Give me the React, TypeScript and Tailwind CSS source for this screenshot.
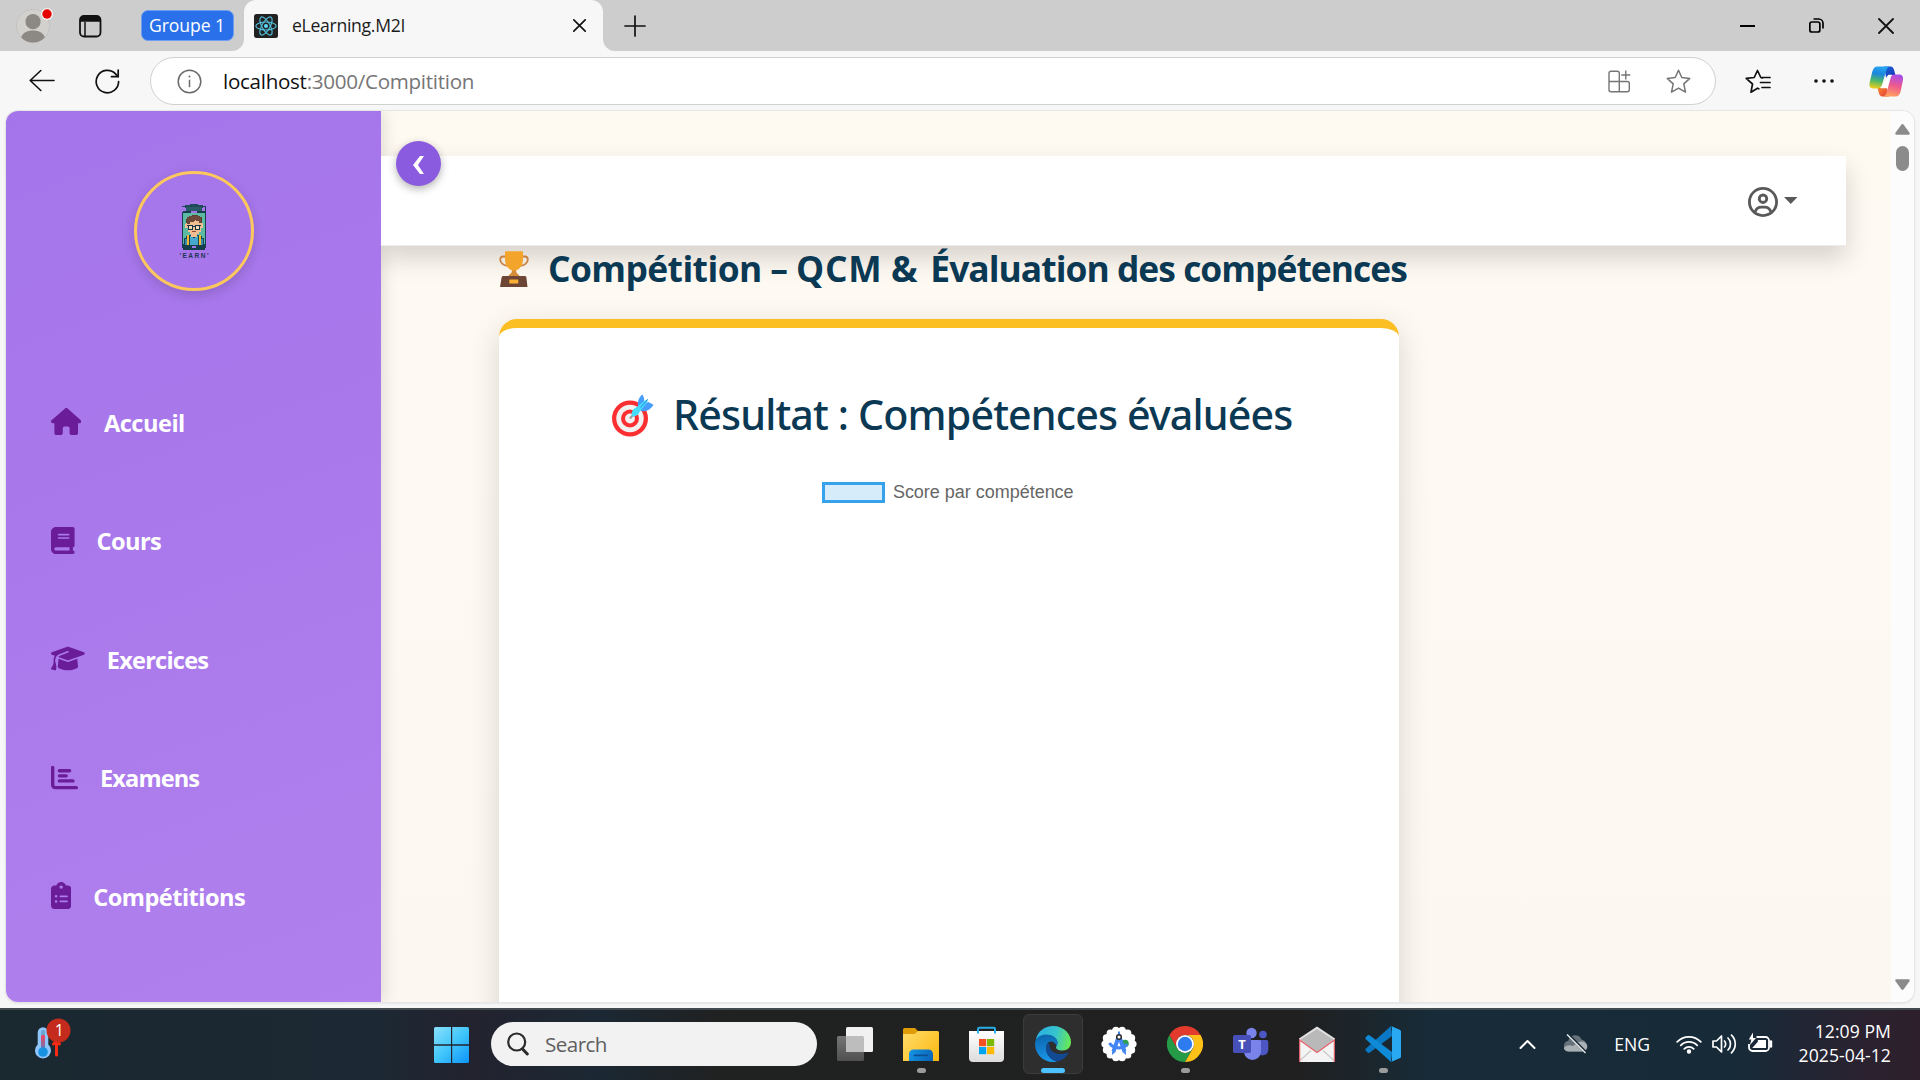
import React from "react";
import {
  FaHouse,
  FaBook,
  FaGraduationCap,
  FaChartBar,
  FaClipboardList,
  FaRegCircleUser,
} from "react-icons/fa6";

const ui = "font-['Open_Sans','Noto_Sans',sans-serif]";

/* ---------- Browser chrome icons ---------- */

function Avatar() {
  return (
    <svg width="38" height="38" viewBox="0 0 38 38" fill="none">
      <circle cx="17" cy="21" r="16.5" fill="#d3d1ce" stroke="#bdbbb8" strokeWidth="0.6" />
      <circle cx="17" cy="16.7" r="7.6" fill="#8c8884" />
      <path d="M5.2 32.5C6.5 28 11 25.6 17 25.6s10.500 2.400 11.800 6.900A16.500 16.500 0 0 1 17 37.500a16.500 16.500 0 0 1-11.800-5z" fill="#8c8884" />
      <circle cx="31" cy="9" r="6" fill="#f3f3f3" />
      <circle cx="31" cy="9" r="4.700" fill="#e60000" />
    </svg>
  );
}

function TabActions() {
  return (
    <svg width="23" height="23" viewBox="0 0 23 23" fill="none">
      <rect x="1" y="1" width="20.500" height="20.500" rx="4" stroke="#111" strokeWidth="1.800" />
      <path d="M1 6.800V5a4 4 0 0 1 4-4h12.500a4 4 0 0 1 4 4v1.800z" fill="#111" />
      <path d="M6 7v14.500" stroke="#111" strokeWidth="1.500" />
    </svg>
  );
}

function ReactFavicon() {
  return (
    <svg width="24" height="24" viewBox="0 0 24 24" fill="none">
      <rect width="24" height="24" rx="2.500" fill="#222" />
      <g stroke="#53c1de" strokeWidth="1.150">
        <ellipse cx="12" cy="12" rx="10.200" ry="4" />
        <ellipse cx="12" cy="12" rx="10.200" ry="4" transform="rotate(60 12 12)" />
        <ellipse cx="12" cy="12" rx="10.200" ry="4" transform="rotate(120 12 12)" />
      </g>
      <circle cx="12" cy="12" r="2" fill="#61dafb" />
    </svg>
  );
}

function Cross({ size, w = 1.6 }: { size: number; w?: number }) {
  return (
    <svg width={size} height={size} viewBox="0 0 16 16" fill="none" stroke="#111" strokeWidth={w} strokeLinecap="round">
      <path d="M1 1l14 14M15 1L1 15" />
    </svg>
  );
}

function BackArrow() {
  return (
    <svg width="26" height="24" viewBox="0 0 26 24" fill="none" stroke="#111" strokeWidth="1.600" strokeLinecap="round" strokeLinejoin="round">
      <path d="M25 11.500H1.200M11.800 1.500L1.200 11.500l10.600 10" />
    </svg>
  );
}

function Reload() {
  return (
    <svg width="25" height="25" viewBox="0 0 25 25" fill="none" stroke="#111" strokeWidth="1.700" strokeLinecap="round" strokeLinejoin="round">
      <path d="M23.600 12.500A11.200 11.200 0 1 1 20.500 4.800l2.500 2.600" />
      <path d="M23.200 1v6.700h-6.700" />
    </svg>
  );
}

function InfoIcon() {
  return (
    <svg width="25" height="25" viewBox="0 0 25 25" fill="none" stroke="#6b6b6b" strokeWidth="1.500">
      <circle cx="12.500" cy="12.500" r="11.300" />
      <path d="M12.500 10.800v7.400" />
      <circle cx="12.500" cy="7.400" r="1" fill="#6b6b6b" stroke="none" />
    </svg>
  );
}

function AppsAdd() {
  return (
    <svg width="23" height="23" viewBox="0 0 23 23" fill="none" stroke="#757575" strokeWidth="1.400">
      <path d="M1 11.500V3.200a2 2 0 0 1 2-2h6.300a2 2 0 0 1 2 2v8.300M1 11.500v8.300a2 2 0 0 0 2 2h16.300a2 2 0 0 0 2-2v-6.300a2 2 0 0 0-2-2zM11.300 11.500v10.300" />
      <path d="M17.800 .5v9M13.300 5h9" />
    </svg>
  );
}

function Star() {
  return (
    <svg width="25" height="25" viewBox="0 0 25 25" fill="none" stroke="#757575" strokeWidth="1.500" strokeLinejoin="round">
      <path d="M12.500 1.300l3.300 7.200 8 .9-6 5.500 1.700 8.200-7-4-7 4 1.700-8.200-6-5.500 8-.9z" />
    </svg>
  );
}

function FavList() {
  return (
    <svg width="26" height="25" viewBox="0 0 26 25" fill="none" stroke="#111" strokeWidth="1.700" strokeLinejoin="round" strokeLinecap="round">
      <path d="M13.800 19.800l-1.300-.600-6.500 4 1.500-8.200-6.300-5.600 8-.9 3.300-7 3.300 7 1.700.300" />
      <path d="M17 8.500h8M15.500 13.500h9.500M17 18.500h8" />
    </svg>
  );
}

function Copilot() {
  return (
    <svg width="35" height="31" viewBox="0 0 35 31" fill="none">
      <defs>
        <linearGradient id="cpA" x1="12" y1="0" x2="8" y2="23" gradientUnits="userSpaceOnUse">
          <stop offset="0" stopColor="#27a9f2" />
          <stop offset="0.350" stopColor="#1c86dc" />
          <stop offset="0.650" stopColor="#4cb86a" />
          <stop offset="1" stopColor="#f5cf17" />
        </linearGradient>
        <linearGradient id="cpB" x1="28" y1="8" x2="22" y2="31" gradientUnits="userSpaceOnUse">
          <stop offset="0" stopColor="#a44cf0" />
          <stop offset="0.500" stopColor="#ee5a8e" />
          <stop offset="1" stopColor="#ffa45c" />
        </linearGradient>
        <linearGradient id="cpC" x1="18" y1="0" x2="25" y2="9" gradientUnits="userSpaceOnUse">
          <stop offset="0" stopColor="#1b62d8" />
          <stop offset="1" stopColor="#1638b8" />
        </linearGradient>
        <linearGradient id="cpD" x1="8" y1="22" x2="17" y2="31" gradientUnits="userSpaceOnUse">
          <stop offset="0" stopColor="#fb8a2c" />
          <stop offset="1" stopColor="#e2413a" />
        </linearGradient>
      </defs>
      <path d="M15 .500h6.500c2.200 0 3 1.500 3.600 3.600l1.300 4.900H20c-1.500.300-2.300 1.500-2.800 3z" fill="url(#cpC)" />
      <path d="M20 30.500h-6.500c-2.200 0-3-1.500-3.600-3.600L8.500 22H14c1.800 0 2.600-1.200 3.100-3z" fill="url(#cpD)" />
      <path d="M19.500 8.700H23l-4 13.600h-7.300z" fill="#fff" />
      <path d="M8.500 .500H21c-2.200.200-3.200 2.200-3.900 4.500l-4 13.500c-.8 2.500-2.200 4-4.600 4H4.300C1 22.500-.1 20 .6 16.500L3.300 5.800C4.200 2.300 5.700.5 8.500.5z" fill="url(#cpA)" />
      <path d="M26.500 30.500H13.500c2.400-.2 3.500-1.700 4.200-4.200l3.900-14.300c.5-2 1.600-3.500 3.700-3.500h4.900c3.300 0 4.400 2.500 3.700 6l-2.200 10.700c-.9 3.500-2.400 5.300-5.200 5.300z" fill="url(#cpB)" />
    </svg>
  );
}

function TabStrip() {
  return (
    <div className="flex h-[51px] shrink-0 bg-[#cdcdcd]">
      <div className="flex w-[232px] shrink-0 items-center pl-4">
        <div className="mb-1 h-[38px] w-[38px]"><Avatar /></div>
        <div className="ml-[25px] mt-[1px]"><TabActions /></div>
        <div className={`ml-[39px] flex h-[31px] w-[93px] shrink-0 items-center justify-center rounded-[7px] border border-[#6f9ff0] bg-[#2970ea] pb-[1px] pr-[1px] text-[17.6px] tracking-[-0.1px] text-white ${ui}`}>
          Groupe 1
        </div>
      </div>
      <svg className="mt-[39px] ml-auto shrink-0" width="12" height="12" viewBox="0 0 12 12"><path d="M12 0v12H0A12 12 0 0 0 12 0z" fill="#f7f7f7" /></svg>
      <div className="flex h-full w-[359px] shrink-0 items-center rounded-t-[12px] bg-[#f7f7f7] pl-[10px] pr-[17px]">
        <ReactFavicon />
        <span className={`ml-[14px] text-[17.6px] tracking-[-0.29px] text-[#1b1b1b] ${ui}`}>eLearning.M2I</span>
        <div className="ml-auto"><Cross size={13} w={2} /></div>
      </div>
      <svg className="mt-[39px] shrink-0" width="12" height="12" viewBox="0 0 12 12"><path d="M0 0v12h12A12 12 0 0 1 0 0z" fill="#f7f7f7" /></svg>
      <div className="flex flex-1 items-center pl-[9px] pr-[26px]">
        <svg width="22" height="22" viewBox="0 0 22 22" stroke="#111" strokeWidth="1.700" strokeLinecap="round"><path d="M11 1v20M1 11h20" /></svg>
        <div className="ml-auto flex items-center">
          <svg width="15" height="2" viewBox="0 0 15 2"><rect width="15" height="2" fill="#000" /></svg>
          <svg className="ml-[54px]" width="15" height="15" viewBox="0 0 15 15" fill="none" stroke="#000" strokeWidth="1.700">
            <rect x=".850" y="4" width="10" height="10" rx="2" />
            <path d="M4.500 1h5.200a4.300 4.300 0 0 1 4.300 4.300v5.200" />
          </svg>
          <div className="ml-[54px]"><Cross size={16} w={1.8} /></div>
        </div>
      </div>
    </div>
  );
}

function Toolbar() {
  return (
    <div className="flex h-[60px] shrink-0 items-center bg-[#f7f7f7] pl-[29px] pr-4">
      <BackArrow />
      <div className="ml-[40px]"><Reload /></div>
      <div className="ml-[30px] flex h-12 w-[1566px] items-center rounded-full border-[1.500px] border-[#d0d0d0] bg-white pl-[26px] pr-6">
        <InfoIcon />
        <span className={`ml-[21px] text-[20.600px] tracking-[-0.29px] text-[#767676] ${ui}`}>
          <span className="text-[#111]">localhost</span>:3000/Compitition
        </span>
        <div className="ml-auto flex items-center gap-[35px]">
          <AppsAdd />
          <Star />
        </div>
      </div>
      <div className="ml-[29px]"><FavList /></div>
      <svg className="ml-[43px]" width="20" height="4" viewBox="0 0 20 4" fill="#111">
        <circle cx="2" cy="2" r="1.800" /><circle cx="10" cy="2" r="1.800" /><circle cx="18" cy="2" r="1.800" />
      </svg>
      <div className="ml-auto"><Copilot /></div>
    </div>
  );
}

/* ---------- Sidebar ---------- */

function StudentLogo() {
  return (
    <svg width="32" height="56" viewBox="0 0 32 56" shapeRendering="crispEdges">
      <path d="M4 3h3V2h5V1h8v1h5v1h3v1h-3v1H7V4H4z" fill="#1f4a58" />
      <path d="M8 4h16v4H8z" fill="#2a5a68" />
      <rect x="27" y="3" width="1" height="6" fill="#183c4c" />
      <path d="M5 8h22v1h1v36h-1v2H5v-2H4V9h1z" fill="#163f4e" />
      <rect x="5" y="10" width="22" height="31" fill="#5bb9a4" />
      <rect x="13" y="8" width="6" height="2" fill="#a675ea" />
      <path d="M9 14h2v-1h3v-1h6v1h2v1h2v10H8v-8h1z" fill="#5d3f32" />
      <path d="M8 20h2v-2h3v-1h7v1h3v2h2v5h-2v4h-2v2H12v-2h-2v-4H7v-4z" fill="#f3bd92" />
      <path d="M9 14h2v-1h10v1h2v6h-2v-2h-3l-1-1-2 2h-3v2H9z" fill="#6c483a" />
      <path d="M9 22h6v5h-5v-4H9zM17 22h6v1h-1v4h-5z" fill="#143746" />
      <path d="M11 23h3v3h-3zM18 23h3v3h-3z" fill="#ffd9b5" />
      <rect x="15" y="23" width="2" height="1" fill="#143746" />
      <rect x="14" y="28" width="4" height="1" fill="#8b4c3c" />
      <path d="M6 35h2v-2h3v-1h10v1h3v2h2v7H6z" fill="#174456" />
      <path d="M12 33h2l2 3 2-3h2v9h-8z" fill="#47a8ce" />
      <path d="M7 36h3v6H7zM22 36h3v6h-3z" fill="#3489b0" />
      <path d="M9 32h2v10H9zM21 32h2v10h-2z" fill="#f6b92c" />
      <rect x="13" y="31" width="6" height="3" fill="#f3bd92" />
      <rect x="14" y="43" width="4" height="2" fill="#a675ea" />
      <text x="16" y="54.500" textAnchor="middle" fontFamily="Liberation Sans" fontWeight="700" fontSize="6.500" textLength="29" fill="#1b3552">'EARN'</text>
    </svg>
  );
}

const links = [
  { label: "Accueil", Icon: FaHouse, cls: "tracking-[-0.5px]", gap: "ml-[22.500px]", w: "w-[30.400px]" },
  { label: "Cours", Icon: FaBook, cls: "tracking-[-0.600px]", gap: "ml-[22px]", w: "w-[23.600px]" },
  { label: "Exercices", Icon: FaGraduationCap, cls: "tracking-[-0.800px]", gap: "ml-[22px]", w: "w-[33.800px]" },
  { label: "Examens", Icon: FaChartBar, cls: "tracking-[-0.900px]", gap: "ml-[22px]", w: "w-[27px]" },
  { label: "Compétitions", Icon: FaClipboardList, cls: "tracking-[-0.550px]", gap: "ml-[22px]", w: "w-[20.300px]" },
];

function Sidebar() {
  return (
    <aside className="flex w-[375px] shrink-0 flex-col bg-linear-[160deg] from-[#a474ea] to-[#b080ee] shadow-[3px_0_15px_rgba(0,0,0,0.120)]">
      <div className="mx-auto mt-[60px] flex size-[120px] shrink-0 items-center justify-center rounded-full border-3 border-[#fcc75c] shadow-[0_4px_12px_rgba(0,0,0,0.150)]">
        <StudentLogo />
      </div>
      <nav className="mt-[71.500px] flex flex-col pl-[45px]">
        {links.map(({ label, Icon, cls, gap, w }) => (
          <a key={label} className="flex h-[118.500px] items-center">
            <Icon className={`h-[27px] shrink-0 text-[#6b1d99] ${w}`} />
            <span className={`pt-[3px] text-[23.600px] font-bold text-white ${ui} ${cls} ${gap}`}>{label}</span>
          </a>
        ))}
      </nav>
    </aside>
  );
}

/* ---------- Page content ---------- */

function Trophy() {
  return (
    <svg className="shrink-0" width="30" height="36" viewBox="0 0 30 36" fill="none">
      <path d="M6.500 5.500H4.200C2 5.500 1.200 7 1.200 8.500c0 3.500 3.600 6 7.300 6.300M23.500 5.500h2.300c2.200 0 3 1.500 3 3 0 3.500-3.600 6-7.300 6.300" stroke="#c98241" strokeWidth="1.800" />
      <path d="M12.800 17h4.400v3.500c0 2 3.300 3 3.300 4.800h-11c0-1.800 3.300-2.800 3.300-4.800z" fill="#d68b3a" />
      <path d="M6 1.500C6 .7 6.500.3 7.200.3h15.600c.7 0 1.200.4 1.200 1.200V9c0 5.500-4 10.500-9 10.500S6 14.500 6 9z" fill="#f2a52a" />
      <path d="M2.600 26.500c.2-.9.800-1.500 1.700-1.500h21.400c.9 0 1.500.6 1.700 1.500L28.500 36H1z" fill="#6d4534" />
      <rect x="10.300" y="28.500" width="9" height="4" rx=".6" fill="#fbb034" />
    </svg>
  );
}

function Target() {
  return (
    <svg className="shrink-0" width="42" height="43" viewBox="0 0 42 43" fill="none">
      <circle cx="18" cy="24.500" r="18" fill="#fb2f31" />
      <circle cx="18" cy="24.500" r="13.700" fill="#f1f1f2" />
      <circle cx="18" cy="24.500" r="9" fill="#fb2f31" />
      <circle cx="18" cy="24.500" r="4.900" fill="#f1f1f2" />
      <path d="M18.500 23.800l5-5" stroke="#9a9a9a" strokeWidth="2.200" strokeLinecap="round" />
      <path d="M26.500 13c-2-4 .5-10 3.800-12.500 1.700 2 2.500 6 1.500 9.500l4.500-2 5.200 2.700c-2.800 4.800-7.500 7.500-12 6.300z" fill="#469dfb" />
      <path d="M19.800 22.300c-.8-4.300 1.200-7.500 4.300-8.800l8.400-6.800 3.800-2-1.500 4-7.300 9.400c-1.400 3.400-4.200 5-7.700 4.200z" fill="#45dcfd" />
      <path d="M28.500 13.500l7-8" stroke="#2f7fe0" strokeWidth="1" />
    </svg>
  );
}

function Navbar() {
  return (
    <header className="mt-[45px] flex h-[90px] w-[1465px] shrink-0 items-center justify-end border-b border-[#ececea] bg-white pr-[48.500px] shadow-[0_12px_24px_rgba(0,0,0,0.160)]">
      <FaRegCircleUser className="mt-[2px] size-[30px] text-[#595959]" />
      <svg className="mb-[1px] ml-[6px]" width="13.500" height="7" viewBox="0 0 13.500 7"><path d="M0 0h13.500L6.750 7z" fill="#595959" /></svg>
    </header>
  );
}

function Competition() {
  return (
    <main className="relative flex flex-1 flex-col overflow-hidden">
      <Navbar />
      <div className="relative ml-[118px] w-[900px]">
        <h1 className="flex h-[46px] items-center text-[35.400px] font-bold tracking-[-0.580px] whitespace-nowrap text-[#0b3954]">
          <Trophy />
          <span className={`ml-[19px] ${ui}`}>
            Compétition – <span className="tracking-[0.800px]">QCM</span> <span className="mr-[5px]">&amp;</span>
            <span className="tracking-[-0.970px]"> Évaluation des compétences</span>
          </span>
        </h1>
        <section className="mt-[27px] flex h-[800px] flex-col items-center rounded-[18px] border-t-9 border-[#fbbf24] bg-white pt-[56px] shadow-[0_9px_30px_rgba(0,0,0,0.150)]">
          <h2 className="flex h-[62px] items-center pl-[6px] text-[41.200px] font-medium tracking-[-0.860px] whitespace-nowrap text-[#0b3954]">
            <Target />
            <span className="ml-[19.500px] font-['Noto_Sans',sans-serif]">Résultat : Compétences évaluées</span>
          </h2>
          <div className="mt-[36px] mr-[2px] flex h-[21px] items-center">
            <span className="h-[21px] w-[63px] border-3 border-[#36a2eb] bg-[#d7ecfb]" />
            <span className="-mt-[1px] ml-[7.500px] font-['Liberation_Sans',sans-serif] text-[18px] tracking-[-0.020px] text-[#666]">Score par compétence</span>
          </div>
        </section>
      </div>
      <button className="absolute top-[30px] left-[15px] flex size-[45px] items-center justify-center rounded-full bg-[#8a5adf] pt-[3px] shadow-[0_3px_9px_rgba(0,0,0,0.300)]">
        <svg width="11" height="18" viewBox="0 0 11 18"><path d="M7 0h4L5 9l6 9H7L0 9z" fill="#fff" /></svg>
      </button>
    </main>
  );
}

function Scrollbar() {
  return (
    <div className="flex w-[23px] shrink-0 flex-col items-center bg-[#fcfcfc] pt-[13px] pb-[12px]">
      <svg width="15" height="11" viewBox="0 0 15 11"><path d="M6.300.8a1.500 1.500 0 0 1 2.400 0l5.800 8c.6.900 0 2-1 2H1.500c-1 0-1.600-1.100-1-2z" fill="#8b8b8b" /></svg>
      <div className="mt-[11px] h-[25px] w-[13px] rounded-full bg-[#8b8b8b]" />
      <svg className="mt-auto" width="15" height="11" viewBox="0 0 15 11"><path d="M6.300 10.200a1.500 1.500 0 0 0 2.400 0l5.800-8c.6-.9 0-2-1-2H1.500c-1 0-1.600 1.100-1 2z" fill="#8b8b8b" /></svg>
    </div>
  );
}

/* ---------- Taskbar ---------- */

function WeatherWidget() {
  return (
    <svg width="40" height="46" viewBox="0 0 40 46" fill="none">
      <defs>
        <linearGradient id="thermo" x1="0" y1="17" x2="0" y2="38" gradientUnits="userSpaceOnUse">
          <stop offset="0" stopColor="#fb3f5e" />
          <stop offset="1" stopColor="#1697e3" />
        </linearGradient>
      </defs>
      <path d="M2.700 14.500a5.300 5.300 0 0 1 10.600 0v12a8 8 0 1 1-10.600 0z" fill="#8ec6fb" />
      <rect x="6" y="12" width="4" height="20" rx="2" fill="#6aa3cf" />
      <rect x="6" y="17" width="4" height="17" rx="1.500" fill="url(#thermo)" />
      <circle cx="8" cy="34" r="4.800" fill="#1792e0" />
      <path d="M21.500 37V26M18.500 26l3-3 3 3" stroke="#fb2a12" strokeWidth="3" strokeLinecap="round" />
      <circle cx="23.500" cy="12.500" r="12" fill="#c42b1c" />
      <text x="24.300" y="18" textAnchor="middle" fontFamily="Open Sans" fontSize="16" fill="#fff">1</text>
    </svg>
  );
}

function StartIcon() {
  return (
    <svg width="35" height="36" viewBox="0 0 35 36">
      <defs>
        <linearGradient id="win" x1="0" y1="0" x2="35" y2="36" gradientUnits="userSpaceOnUse">
          <stop offset="0" stopColor="#8ae0fb" />
          <stop offset="0.500" stopColor="#41c6fb" />
          <stop offset="1" stopColor="#0c94f8" />
        </linearGradient>
      </defs>
      <path d="M1.500 0H17v17.300H0V1.500A1.500 1.500 0 0 1 1.500 0zM18.200 0h15.300A1.500 1.500 0 0 1 35 1.500v15.800H18.200zM0 18.700h17V36H1.500A1.500 1.500 0 0 1 0 34.500zM18.200 18.700H35v15.800a1.500 1.500 0 0 1-1.500 1.500H18.200z" fill="url(#win)" />
    </svg>
  );
}

function TaskViewIcon() {
  return (
    <svg width="36" height="36" viewBox="0 0 36 36">
      <defs>
        <linearGradient id="tv" x1="0" y1="9" x2="0" y2="35" gradientUnits="userSpaceOnUse">
          <stop offset="0" stopColor="#777" />
          <stop offset="1" stopColor="#505050" />
        </linearGradient>
      </defs>
      <rect x="0" y="10" width="27" height="25" rx="1.500" fill="url(#tv)" />
      <rect x="9" y="1" width="27" height="25" rx="1.500" fill="#f1f1f1" />
      <path d="M9 10h16.500a1.500 1.500 0 0 1 1.500 1.500V26H10.500A1.500 1.500 0 0 1 9 24.500z" fill="#bdbdbd" />
    </svg>
  );
}

function FolderIcon() {
  return (
    <svg width="36" height="36" viewBox="0 0 36 36">
      <defs>
        <linearGradient id="fold" x1="0" y1="5" x2="36" y2="35" gradientUnits="userSpaceOnUse">
          <stop offset="0" stopColor="#ffdc6b" />
          <stop offset="1" stopColor="#fbb810" />
        </linearGradient>
        <linearGradient id="foldB" x1="6" y1="24" x2="30" y2="35" gradientUnits="userSpaceOnUse">
          <stop offset="0" stopColor="#1496e6" />
          <stop offset="1" stopColor="#0a62b4" />
        </linearGradient>
      </defs>
      <path d="M0 3.500A1.500 1.500 0 0 1 1.500 2H12l3.500 3.500V10H0z" fill="#df9c06" />
      <path d="M0 8h11.500l3.500-3h19.500A1.500 1.500 0 0 1 36 6.500V35H0z" fill="url(#fold)" />
      <path d="M6 28a4.500 4.500 0 0 1 4.500-4.500h15A4.500 4.500 0 0 1 30 28v7H6z" fill="url(#foldB)" />
      <rect x="10.500" y="28.500" width="14.500" height="1.800" rx=".9" fill="#0a4f94" />
    </svg>
  );
}

function StoreIcon() {
  return (
    <svg width="36" height="36" viewBox="0 0 36 36" fill="none">
      <defs>
        <linearGradient id="store" x1="0" y1="5" x2="0" y2="36" gradientUnits="userSpaceOnUse">
          <stop offset="0" stopColor="#fff" />
          <stop offset="1" stopColor="#dcdcdc" />
        </linearGradient>
      </defs>
      <path d="M0 5h35v27a4 4 0 0 1-4 4H4a4 4 0 0 1-4-4z" fill="url(#store)" />
      <path d="M9 7.500V3a1.200 1.200 0 0 1 1.200-1.200h14.600A1.200 1.200 0 0 1 26 3v4.500" stroke="#27aee8" strokeWidth="2" />
      <rect x="10" y="13" width="7.200" height="7.200" fill="#f25022" />
      <rect x="18" y="13" width="7.200" height="7.200" fill="#7fba00" />
      <rect x="10" y="21" width="7.200" height="7.200" fill="#00a4ef" />
      <rect x="18" y="21" width="7.200" height="7.200" fill="#ffb900" />
    </svg>
  );
}

function EdgeIcon() {
  return (
    <svg width="36" height="36" viewBox="0 0 36 36">
      <defs>
        <linearGradient id="edA" x1="3" y1="8" x2="36" y2="16" gradientUnits="userSpaceOnUse">
          <stop offset="0" stopColor="#2bb1e0" />
          <stop offset="0.500" stopColor="#35c3cf" />
          <stop offset="1" stopColor="#6bea4f" />
        </linearGradient>
        <linearGradient id="edB" x1="8" y1="9" x2="12" y2="36" gradientUnits="userSpaceOnUse">
          <stop offset="0" stopColor="#0b66ae" />
          <stop offset="1" stopColor="#1b98ea" />
        </linearGradient>
      </defs>
      <path d="M.800 14C2.500 5 10 0 18 0c11 0 18 8 18 16 0 5-3.500 8.500-8.500 8.500-4.500 0-6.500-1.500-6.500-3 0-1 1.500-2 1.500-4.500C22.500 12.500 17.500 9 12 9 7 9 3 11 .800 14z" fill="url(#edA)" />
      <path d="M0 18c0-6 5-9.500 11-9.500 7 0 11.500 4 11.500 8.500 0 1.500-.5 2.500-1 3-1.500-5-7-6-9.500-2-3 5 1 15 10 17.500-2 .5-3.500.5-4 .5C8 36 0 28 0 18z" fill="url(#edB)" />
      <path d="M11.500 19C9.500 26 14 34 22 35.500c5-1 9-4 11-8 .4-.8-.2-1.200-1-.8-3 1.300-5 1.500-7 1.300-7-.5-11-4-10.500-10-1-1-2.500-.5-3 1z" fill="#114a93" />
    </svg>
  );
}

function AndroidStudioIcon() {
  const bumps = Array.from({ length: 14 }, (_, i) => (i * 2 * Math.PI) / 14);
  return (
    <svg width="36" height="36" viewBox="0 0 36 36" fill="none">
      <circle cx="18" cy="18" r="16" fill="#fff" />
      {bumps.map((a) => (
        <circle key={a} cx={18 + 14 * Math.cos(a)} cy={18 + 14 * Math.sin(a)} r="3.600" fill="#fff" />
      ))}
      <circle cx="24" cy="17.500" r="3.800" fill="#2e9e4f" />
      <path d="M8.500 17c3.500 6 14 6.500 17.500 1" stroke="#4285f4" strokeWidth="3.200" />
      <path d="M17.500 11L12.500 25.500M18.500 11L23.500 25.500" stroke="#4285f4" strokeWidth="4" />
      <path d="M14.500 26l-3.500 3 .200-4.500zM21.500 26l3.500 3-.200-4.500z" fill="#4285f4" />
      <path d="M17 5.500h2v4h-2z" fill="#4285f4" />
      <circle cx="18" cy="11" r="2.300" fill="#fff" stroke="#2b2b2b" strokeWidth="1.500" />
    </svg>
  );
}

function ChromeIcon() {
  return (
    <svg width="36" height="36" viewBox="0 0 36 36">
      <path d="M2.400 9A18 18 0 0 0 18 36l7.800-13.500a9 9 0 0 1-15.600 0z" fill="#259a47" />
      <path d="M33.600 9A18 18 0 0 1 18 36l7.800-13.500A9 9 0 0 0 18 9z" fill="#fcc118" />
      <path d="M2.400 9a18 18 0 0 1 31.200 0H18a9 9 0 0 0-7.800 13.500z" fill="#e23b2e" />
      <circle cx="18" cy="18" r="9" fill="#fff" />
      <circle cx="18" cy="18" r="7.200" fill="#2d7bee" />
    </svg>
  );
}

function TeamsIcon() {
  return (
    <svg width="36" height="36" viewBox="0 0 36 36">
      <circle cx="30" cy="8.500" r="3.800" fill="#4d57c4" />
      <path d="M25 14h8.500A1.800 1.800 0 0 1 35.300 15.800V24a5.700 5.700 0 0 1-10.300 3z" fill="#4d57c4" />
      <circle cx="18.500" cy="7" r="5.200" fill="#7a83ea" />
      <path d="M11 14h15.500a1.500 1.500 0 0 1 1.500 1.500v10a8.500 8.500 0 0 1-17 0z" fill="#7a83ea" />
      <rect x="0" y="9" width="18" height="18" rx="1.700" fill="#4650b8" />
      <text x="9" y="22.700" textAnchor="middle" fontFamily="Open Sans" fontWeight="700" fontSize="13" fill="#fff">T</text>
    </svg>
  );
}

function MailIcon() {
  return (
    <svg width="36" height="36" viewBox="0 0 36 36">
      <path d="M0 12.500L18 .5l18 12V15L18 27 0 15z" fill="#e2e2e2" />
      <path d="M1.500 13.500L18 3l16.500 10.500L18 26z" fill="#b9b9b9" />
      <path d="M0 14l18 12.500L36 14v22H0z" fill="#f4f4f4" />
      <path d="M.5 35L12 24.500M35.500 35L24 24.500" stroke="#c9c9c9" strokeWidth="1.200" />
      <path d="M.6 36V14L18 26.500 35.400 14v22" fill="none" stroke="#e2606a" strokeWidth="1.300" />
    </svg>
  );
}

function VsCodeIcon() {
  return (
    <svg width="36" height="36" viewBox="0 0 36 36">
      <path d="M26 0l1 10L4.500 26.800c-1 .7-4.600-1.800-4-3.800z" fill="#0a78c4" />
      <path d="M4.500 9.200L27 26l-1 10L.5 13c-.6-2 3-4.500 4-3.800z" fill="#0f8ad6" />
      <path d="M26 0l8.700 3.700A2 2 0 0 1 36 5.600v24.800a2 2 0 0 1-1.300 1.900L26 36c.8-.6 1-1.200 1-2V2c0-.8-.2-1.400-1-2z" fill="#2aa9f3" />
    </svg>
  );
}

const apps = [
  { name: "taskview", Icon: TaskViewIcon, state: "" },
  { name: "files", Icon: FolderIcon, state: "open" },
  { name: "store", Icon: StoreIcon, state: "" },
  { name: "edge", Icon: EdgeIcon, state: "active" },
  { name: "studio", Icon: AndroidStudioIcon, state: "" },
  { name: "chrome", Icon: ChromeIcon, state: "open" },
  { name: "teams", Icon: TeamsIcon, state: "" },
  { name: "mail", Icon: MailIcon, state: "" },
  { name: "code", Icon: VsCodeIcon, state: "open" },
];

function AppButton({ Icon, state }: { Icon: () => React.ReactElement; state: string }) {
  return (
    <div
      className={
        state === "active"
          ? "flex h-[60px] w-[60px] flex-col items-center rounded-[6px] border border-[#3b3b3b] bg-[#2e2e2e] pt-[11px]"
          : "flex h-[60px] w-[60px] flex-col items-center pt-[12px]"
      }
    >
      <Icon />
      {state === "active" && <span className="mt-[6px] h-[5px] w-[24px] rounded-full bg-[#4cc2ff]" />}
      {state === "open" && <span className="mt-[6px] h-[5px] w-[9px] rounded-full bg-[#9b9b9b]" />}
    </div>
  );
}

function Tray() {
  return (
    <div className={`ml-auto flex h-[60px] items-center pr-[29px] text-[17.600px] text-white ${ui}`}>
      <svg width="17" height="11" viewBox="0 0 17 11" fill="none" stroke="#fff" strokeWidth="2" strokeLinecap="round" strokeLinejoin="round"><path d="M1.500 9l7-7 7 7" /></svg>
      <svg className="ml-[27px]" width="25" height="20" viewBox="0 0 25 20" fill="none">
        <path d="M5.500 17.500A5.500 5.500 0 0 1 5.300 6.700 7 7 0 0 1 18.500 5.500 6.200 6.200 0 0 1 19 17.500z" fill="#66727b" />
        <path d="M.800 14c2-3 6-3.500 9-2l5-3.500c4-2 9-.5 9.500 3.500.2 3.500-2.300 5.500-5 5.500H5.500C3 17.500 1.300 16 .8 14z" fill="#a9b0b5" />
        <path d="M5 .5l18 18" stroke="#172936" strokeWidth="3" />
        <path d="M4 .500l18.500 18.500" stroke="#e8eaeb" strokeWidth="1.500" />
      </svg>
      <span className="ml-[26px]">ENG</span>
      <svg className="ml-[26px]" width="26" height="19" viewBox="0 0 26 19" fill="none" stroke="#fff" strokeWidth="1.800" strokeLinecap="round">
        <path d="M1.200 6.800a16.500 16.500 0 0 1 23.600 0M4.800 10.400a11.500 11.500 0 0 1 16.400 0M8.300 13.800a6.500 6.500 0 0 1 9.400 0" />
        <circle cx="13" cy="16.500" r="1.300" fill="#fff" />
      </svg>
      <svg className="ml-[10px]" width="25" height="20" viewBox="0 0 25 20" fill="none" stroke="#fff" strokeWidth="1.700" strokeLinecap="round" strokeLinejoin="round">
        <path d="M1 7h3.500L9.500 2v16l-5-5H1zM12.500 7c1.500 1.500 1.500 4.500 0 6M16 4c3.300 3.300 3.300 8.700 0 12M19.500 1.200c5 5 5 12.600 0 17.600" />
      </svg>
      <svg className="mb-[4px] ml-[11px]" width="25" height="21" viewBox="0 0 25 21" fill="none">
        <path d="M8.500 5H17.500A3.500 3.500 0 0 1 21 8.500v7a3.500 3.500 0 0 1-3.500 3.500h-13A3.500 3.500 0 0 1 1 15.500V12" stroke="#fff" strokeWidth="1.800" />
        <path d="M10 8h8v8H4.200l5.500-6z" fill="#fff" />
        <path d="M23 9.500v5" stroke="#fff" strokeWidth="2.400" strokeLinecap="round" />
        <path d="M5 .5L.8 7.500h2.500L2 13l6-7H5z" fill="#fff" />
      </svg>
      <div className="mb-[3px] ml-[25.500px] text-right leading-6 tracking-[0.060px]">
        <div>12:09 PM</div>
        <div>2025-04-12</div>
      </div>
    </div>
  );
}

function Taskbar() {
  return (
    <footer className="flex h-[72px] shrink-0 border-t-2 border-[#434a50] bg-[linear-gradient(90deg,#1a2830_0px,#1c2833_380px,#23232f_470px,#1b2833_600px,#202121_720px,#202020_1300px,#172b38_1430px,#172a38_1740px,#2a2230_1860px,#2e1f2c_1920px)] pt-[4px]">
      <div className="flex w-[421px] shrink-0 pl-[35px] pt-[4px]"><WeatherWidget /></div>
      <div className="flex h-[60px] w-[61px] shrink-0 justify-center pt-[13px]"><StartIcon /></div>
      <div className={`mt-[8px] ml-[9px] flex h-[44px] w-[326px] shrink-0 items-center rounded-full bg-[#f2f2f2] pl-4 text-[20.600px] tracking-[-0.550px] text-[#5f5f5f] ${ui}`}>
        <svg width="22" height="24" viewBox="0 0 22 24" fill="none" stroke="#2a2a2a">
          <circle cx="9.700" cy="10" r="8.500" strokeWidth="2.200" />
          <path d="M15.500 17l4.800 5" strokeWidth="3" strokeLinecap="round" />
        </svg>
        <span className="ml-[16px]">Search</span>
      </div>
      <div className="ml-[8px] flex gap-[6px]">
        {apps.map((a) => (
          <AppButton key={a.name} Icon={a.Icon} state={a.state} />
        ))}
      </div>
      <Tray />
    </footer>
  );
}

export default function App() {
  return (
    <div className="flex h-[1080px] w-[1920px] flex-col overflow-hidden bg-[#f7f7f7]">
      <TabStrip />
      <Toolbar />
      <div className="mx-[6px] mb-[6px] flex h-[891px] shrink-0 overflow-hidden rounded-[12px] bg-linear-to-b from-[#fefaf2] to-[#fdf7f1] shadow-[0_0_0_1px_#e6e6e6,0_1px_3px_rgba(0,0,0,0.150)]">
        <Sidebar />
        <Competition />
        <Scrollbar />
      </div>
      <Taskbar />
    </div>
  );
}
